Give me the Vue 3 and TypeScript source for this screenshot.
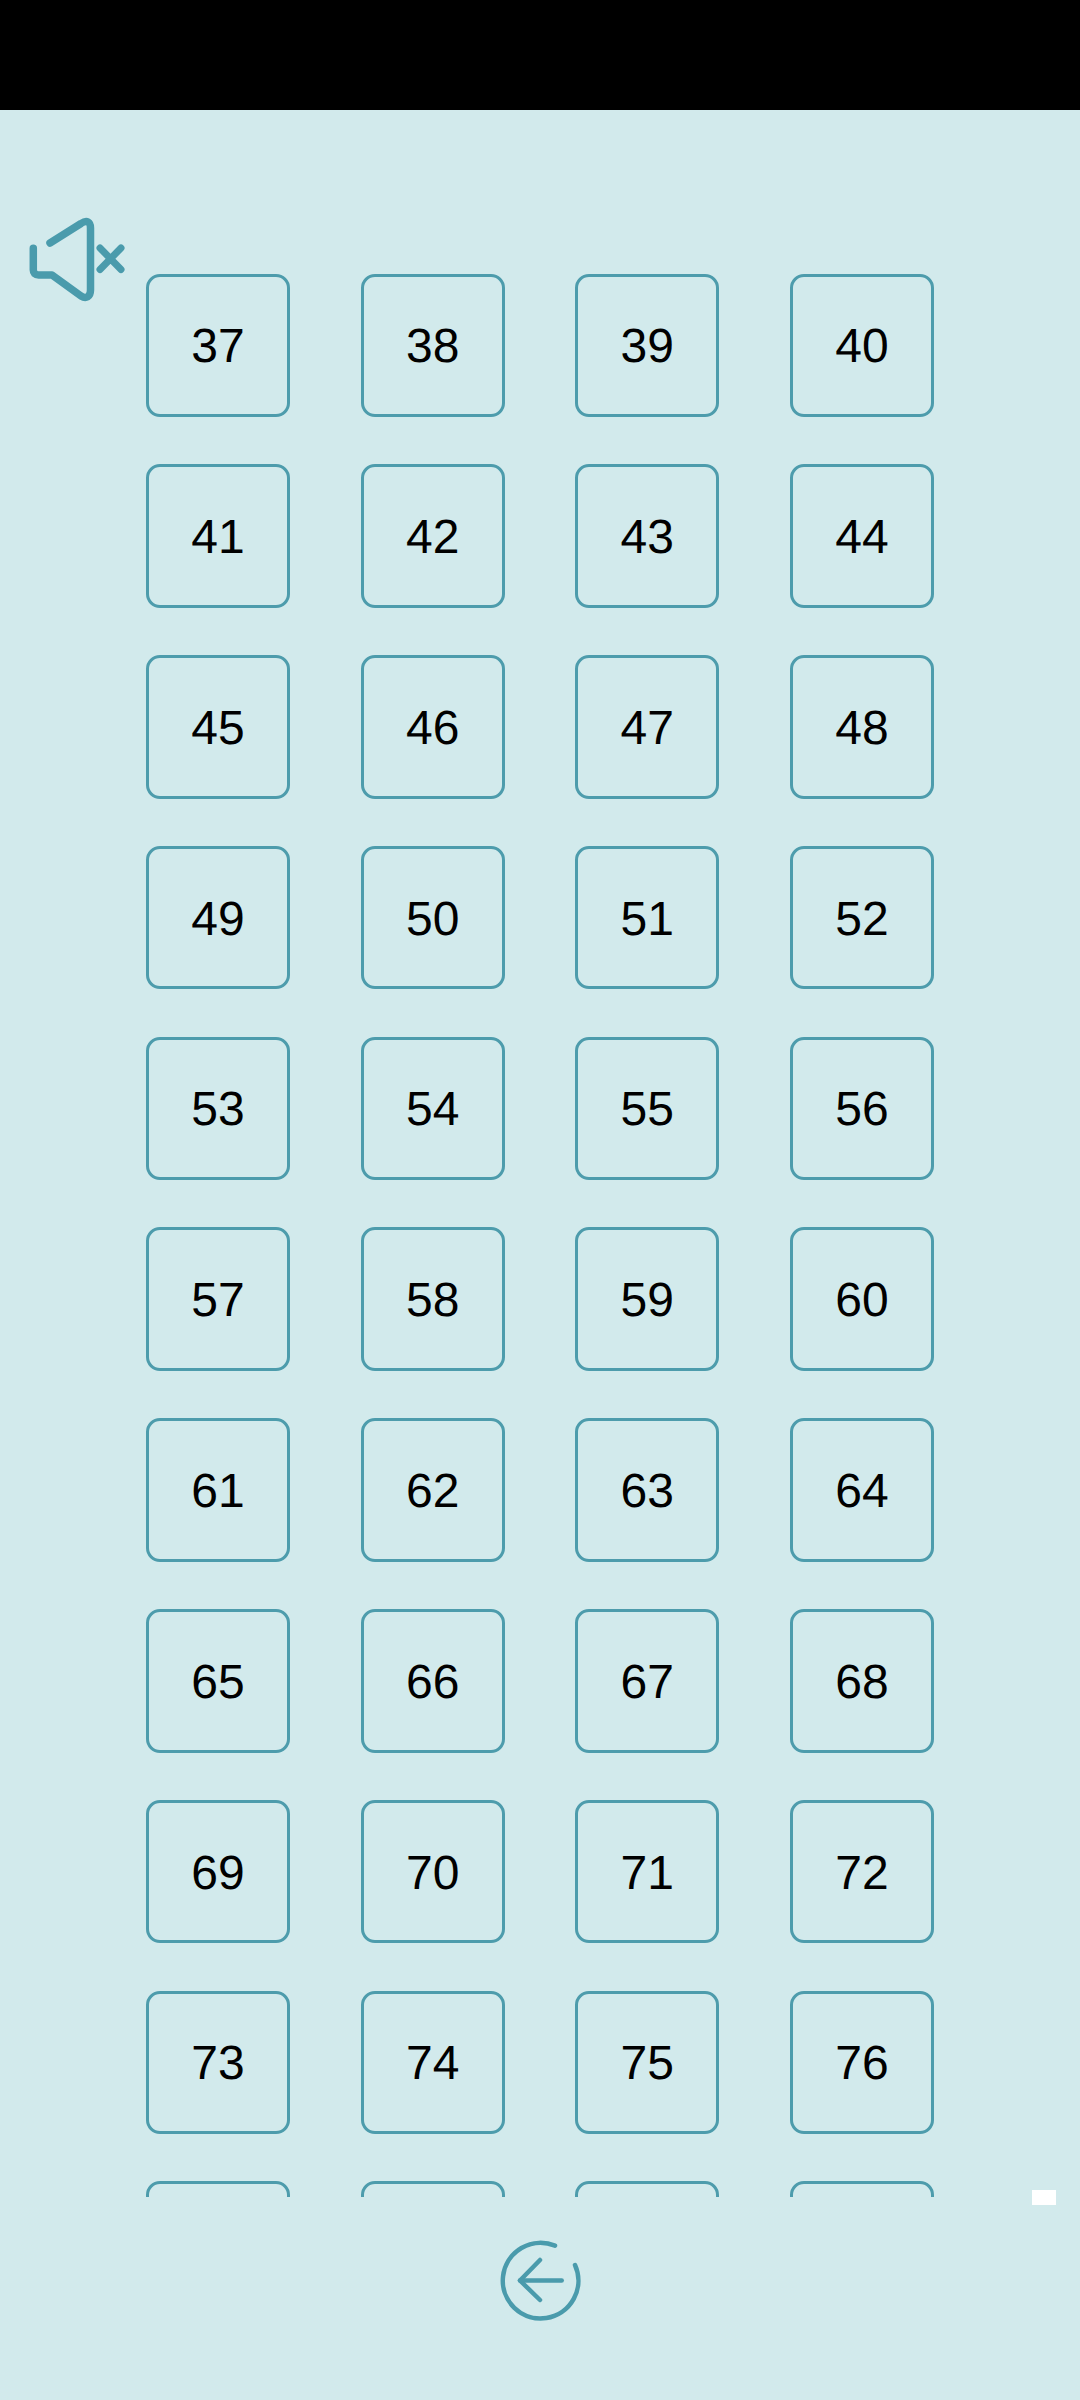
<template>
  <div class="screen">
    <div class="status-bar"></div>

    <header class="top">
      <button class="sound" aria-label="Sound off">
        <svg width="100" height="90" viewBox="0 0 100 90" fill="none">
          <path
            d="M22 30 L53 10.5 C59 6.5 62.5 9 62.5 15 L62.5 77 C62.5 84 58 86 53 83 L24 62 L10.5 62 C7 62 5.3 60 5.3 57 L5.3 35.3"
            stroke="#4a9bac"
            stroke-width="7.5"
            stroke-linecap="round"
            stroke-linejoin="round"
          />
          <path
            d="M72 35 L93 56.5 M93 35 L72 56.5"
            stroke="#4a9bac"
            stroke-width="7"
            stroke-linecap="round"
          />
        </svg>
      </button>
    </header>

    <main class="levels">
      <div class="grid">
        <button v-for="level in levels" :key="level" class="level">{{ level }}</button>
      </div>
      <span class="thumb"></span>
    </main>

    <footer class="bottom">
      <button class="back" aria-label="Back">
        <svg width="84" height="84" viewBox="0 0 84 84" fill="none" stroke="#4a9bac" stroke-width="4.5" stroke-linecap="round" stroke-linejoin="round">
          <path d="M57 7.7 A37.8 37.8 0 1 0 77 27" />
          <path d="M42 22 L22 42.5 L42 62" />
          <path d="M22 42.5 L63.7 42.5" />
        </svg>
      </button>
    </footer>
  </div>
</template>

<script setup lang="ts">
const levels: number[] = Array.from({ length: 44 }, (_, i) => i + 37);
</script>

<style>
html,
body {
  margin: 0;
  background: #d2eaec;
}
</style>

<style scoped>
.screen {
  width: 1080px;
  height: 2400px;
  display: flex;
  flex-direction: column;
  overflow: hidden;
  background: #d2eaec;
  font-family: "Liberation Sans", Arial, sans-serif;
}
.status-bar {
  flex: none;
  height: 110px;
  background: #000;
}
.top {
  flex: none;
  height: 163.5px;
  padding: 103px 0 0 28px;
  box-sizing: border-box;
}
button {
  display: block;
  padding: 0;
  border: none;
  background: none;
}
.levels {
  position: relative;
  flex: none;
  height: 1923.5px;
}
.grid {
  height: 100%;
  overflow: hidden;
  padding-left: 146px;
  box-sizing: border-box;
  display: grid;
  align-content: start;
  grid-template-columns: repeat(4, 144px);
  grid-auto-rows: 143.5px;
  column-gap: 70.67px;
  row-gap: 47.3px;
}
.level {
  padding-top: 3px;
  border: 3px solid #4d9cac;
  border-radius: 14px;
  box-sizing: border-box;
  font-family: inherit;
  font-size: 48px;
  color: #000;
  text-rendering: geometricPrecision;
}
.thumb {
  position: absolute;
  left: 1032px;
  top: 1916.5px;
  width: 24px;
  height: 15px;
  background: #fff;
}
.bottom {
  flex: none;
  display: flex;
  justify-content: center;
  padding-top: 41px;
}
</style>
